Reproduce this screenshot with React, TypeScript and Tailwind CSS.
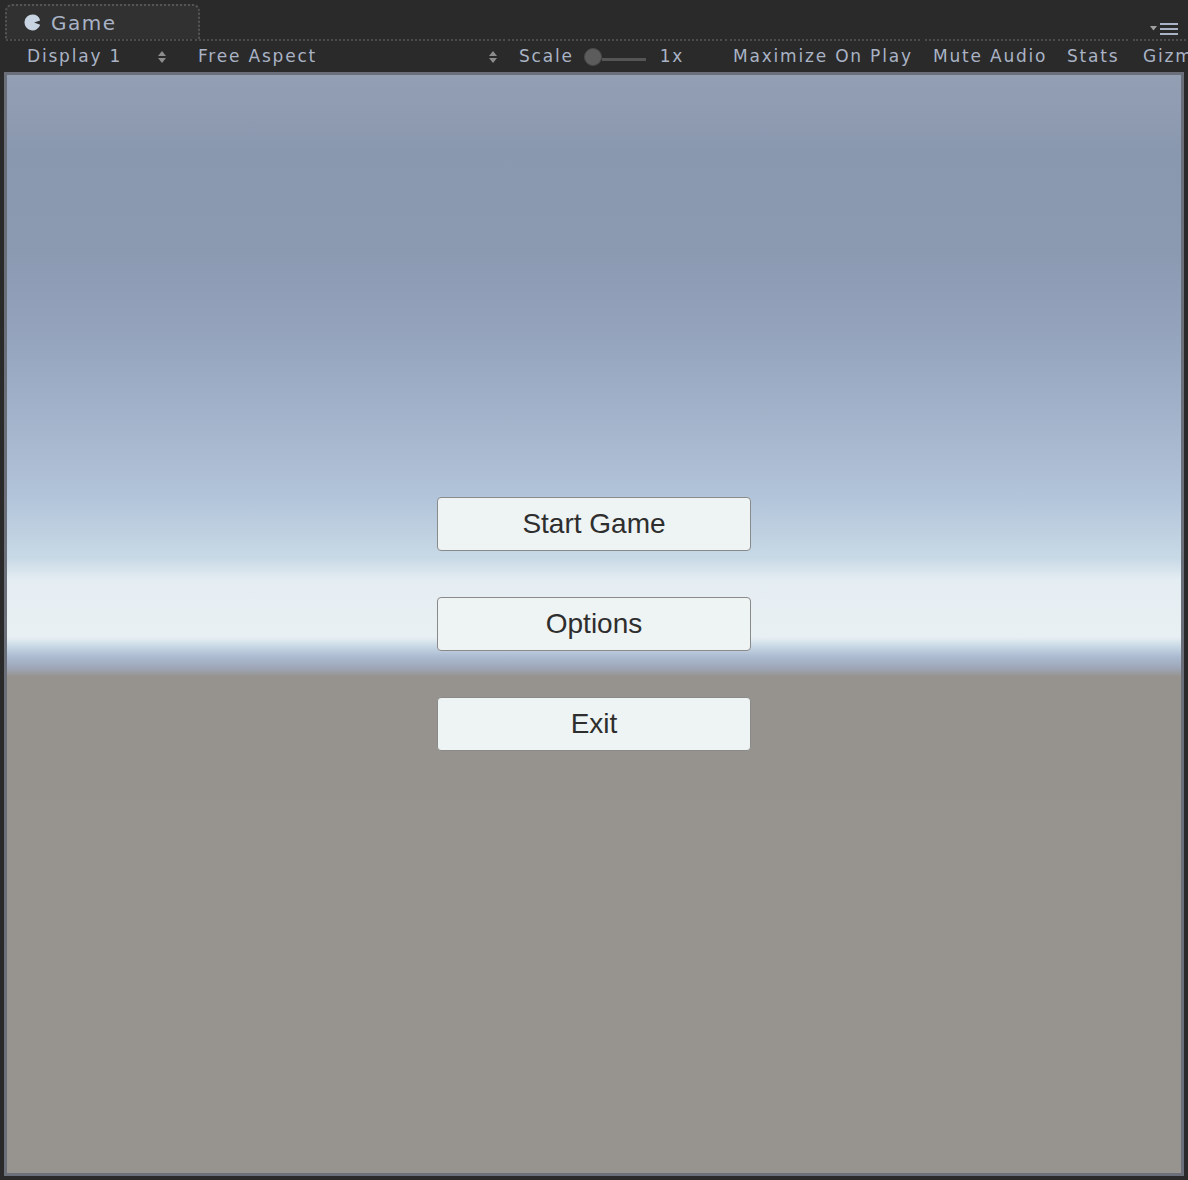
import React from "react";

const txt = "text-[#a9b3c5] text-[17px] tracking-[1.8px] font-['DejaVu_Sans',sans-serif] leading-none whitespace-nowrap";

function UpDown() {
  return (
    <svg width="8" height="12" viewBox="0 0 8 12" className="shrink-0">
      <path d="M4 0 L8 5 L0 5 Z" fill="#8d8d8d" />
      <path d="M0 7 L8 7 L4 12 Z" fill="#8d8d8d" />
    </svg>
  );
}

function Group({ className, children }: { className: string; children?: React.ReactNode }) {
  return (
    <div className={`h-[31px] shrink-0 border-t-2 border-dotted border-[#4c4c4c] flex items-center pt-[2px] ${className}`}>
      {children}
    </div>
  );
}

function MenuButton({ label }: { label: string }) {
  return (
    <button className="w-[314px] h-[54px] bg-[#eef3f3] border border-[#8a8a8a] rounded-[4px] text-[28px] text-[#2e2e2e] font-['Liberation_Sans',Arial,sans-serif] leading-none flex items-center justify-center">
      {label}
    </button>
  );
}

export default function App() {
  return (
    <div className="w-[1188px] h-[1180px] bg-[#2a2a2a] flex flex-col overflow-hidden">
      {/* Tab row */}
      <div className="h-[39px] flex items-end justify-between shrink-0">
        <div className="ml-[5px] w-[195px] h-[35px] border-2 border-b-0 border-dotted border-[#555555] rounded-t-[7px] bg-[#313131] flex items-center pl-[17px] gap-[10px]">
          <svg width="17" height="17" viewBox="0 0 16 16">
            <path d="M8 0.5 A7.5 7.5 0 1 0 15.2 10 L9.5 8 L15.2 6 A7.5 7.5 0 0 0 8 0.5 Z" fill="#c9d4e3" />
          </svg>
          <span className="text-[#a9b3c5] text-[20px] tracking-[1.5px] font-['DejaVu_Sans',sans-serif] leading-none">Game</span>
        </div>
        <div className="self-center mt-[18px] mr-[10px] flex items-center gap-[3px]">
          <svg width="7" height="5" viewBox="0 0 7 5">
            <path d="M0 0 L7 0 L3.5 4.5 Z" fill="#a0a0a0" />
          </svg>
          <div className="flex flex-col gap-[3px]">
            <div className="w-[18px] h-[2px] bg-[#a9b3c5]" />
            <div className="w-[18px] h-[2px] bg-[#a9b3c5]" />
            <div className="w-[18px] h-[2px] bg-[#a9b3c5]" />
          </div>
        </div>
      </div>

      {/* Toolbar */}
      <div className="h-[33px] flex items-start shrink-0 overflow-hidden">
        <Group className="ml-[6px] w-[182px] pl-[21px] pr-[22px] justify-between">
          <span className={txt}>Display 1</span>
          <UpDown />
        </Group>
        <Group className="ml-[2px] w-[315px] pl-[8px] pr-[8px] justify-between">
          <span className={txt}>Free Aspect</span>
          <UpDown />
        </Group>
        <Group className="ml-[3px] w-[214px] pl-[11px]">
          <span className={txt}>Scale</span>
          <div className="ml-[10px] w-[18px] h-[18px] rounded-full bg-[#5c5c5c] border border-[#4a4a4a] shrink-0" />
          <div className="w-[44px] h-[3px] mt-[6px] bg-[#555555] shrink-0" />
          <span className={`${txt} ml-[14px]`}>1x</span>
        </Group>
        <Group className="ml-[3px] w-[195px] pl-[8px]">
          <span className={txt}>Maximize On Play</span>
        </Group>
        <Group className="ml-[5px] w-[130px] pl-[8px]">
          <span className={txt}>Mute Audio</span>
        </Group>
        <Group className="ml-[3px] w-[70px] pl-[9px]">
          <span className={txt}>Stats</span>
        </Group>
        <Group className="ml-[5px] w-[100px] pl-[10px]">
          <span className={txt}>Gizmos</span>
        </Group>
      </div>

      {/* Game view */}
      <div className="mx-[4px] mb-[4px] flex-1 border-[3px] border-[#6b6f79] flex items-center justify-center bg-[linear-gradient(to_bottom,#939fb3_0%,#8a98af_7%,#8b99b1_16%,#96a6be_25%,#a6b7ce_33%,#b3c5da_38.7%,#c8d9e6_44%,#e4edf2_46%,#e9f0f3_51.2%,#c9d9e6_52%,#abbad0_53%,#9ea7b8_54%,#96938e_54.8%,#97948f_100%)]">
        <div className="flex flex-col gap-[46px]">
          <MenuButton label="Start Game" />
          <MenuButton label="Options" />
          <MenuButton label="Exit" />
        </div>
      </div>
    </div>
  );
}
